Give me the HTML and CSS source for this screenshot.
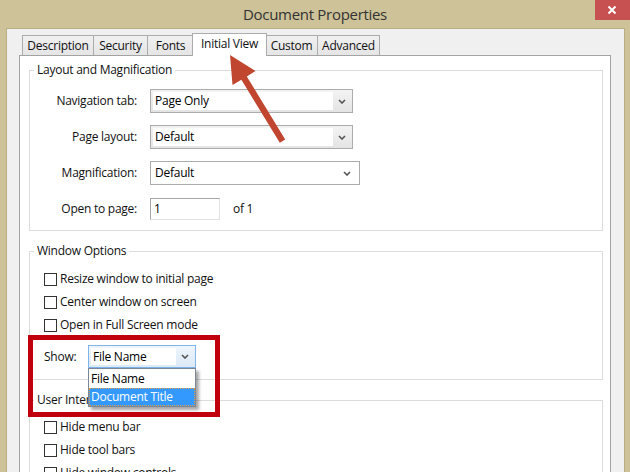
FILE: index.html
```html
<!DOCTYPE html>
<html>
<head>
<meta charset="utf-8">
<title>Document Properties</title>
<link rel="stylesheet" href="styles.css">
</head>
<body>
<div class="window">
  <div class="titlebar">
    <div></div>
    <div class="title">Document Properties</div>
    <div class="close"><svg width="10" height="10" viewBox="0 0 10 10"><path d="M1.5 1.5L8.5 8.5M8.5 1.5L1.5 8.5" stroke="#fff" stroke-width="2"/></svg></div>
  </div>
  <div class="dialog">
    <div class="tabs">
      <div class="tab t-desc">Description</div>
      <div class="tab t-sec">Security</div>
      <div class="tab t-fonts">Fonts</div>
      <div class="tab tab-active t-init">Initial View</div>
      <div class="tab t-custom">Custom</div>
      <div class="tab t-adv">Advanced</div>
    </div>
    <div class="panel">
      <fieldset class="group">
        <legend>Layout and Magnification</legend>
        <div class="form">
          <div class="flabel">Navigation tab:</div>
          <div class="select select-grey w203"><span class="val">Page Only</span><span class="btn"><svg width="8" height="5" viewBox="0 0 8 5"><path d="M1 1L4 4L7 1" fill="none" stroke="#555" stroke-width="1.6"/></svg></span></div>
          <div class="flabel">Page layout:</div>
          <div class="select select-grey w203"><span class="val">Default</span><span class="btn"><svg width="8" height="5" viewBox="0 0 8 5"><path d="M1 1L4 4L7 1" fill="none" stroke="#555" stroke-width="1.6"/></svg></span></div>
          <div class="flabel">Magnification:</div>
          <div class="select select-white w210"><span class="val">Default</span><span class="btn"><svg width="8" height="5" viewBox="0 0 8 5"><path d="M1 1L4 4L7 1" fill="none" stroke="#555" stroke-width="1.6"/></svg></span></div>
          <div class="flabel">Open to page:</div>
          <div class="pagefield"><div class="textbox">1</div><span class="of">of 1</span></div>
        </div>
      </fieldset>

      <fieldset class="group">
        <legend>Window Options</legend>
        <div class="checks">
          <div class="cb"><span class="box"></span>Resize window to initial page</div>
          <div class="cb"><span class="box"></span>Center window on screen</div>
          <div class="cb"><span class="box"></span>Open in Full Screen mode</div>
        </div>
        <div class="showrow">
          <span class="showlabel">Show:</span>
          <div class="combo">
            <div class="select select-focus"><span class="val">File Name</span><span class="btn"><svg width="8" height="5" viewBox="0 0 8 5"><path d="M1 1L4 4L7 1" fill="none" stroke="#555" stroke-width="1.6"/></svg></span></div>
            <div class="droplist">
              <div class="item">File Name</div>
              <div class="item item-sel">Document Title</div>
            </div>
          </div>
        </div>
      </fieldset>

      <fieldset class="group">
        <legend>User Interface Options</legend>
        <div class="checks checks-ui">
          <div class="cb"><span class="box"></span>Hide menu bar</div>
          <div class="cb"><span class="box"></span>Hide tool bars</div>
          <div class="cb"><span class="box"></span>Hide window controls</div>
        </div>
      </fieldset>
    </div>
  </div>
  <div class="redbox"></div>
  <svg class="arrow" width="630" height="472" viewBox="0 0 630 472">
    <polygon points="230,55 255.5,71 246.8,76.4 285.2,139.4 279.8,142.8 241.4,79.8 232.5,85" fill="#c1462f"/>
  </svg>
</div>
</body>
</html>
```

FILE: styles.css
```css
* { box-sizing: border-box; }
html, body { margin: 0; padding: 0; }
body {
  font-family: "Open Sans", "Noto Sans", "Liberation Sans", sans-serif;
  font-size: 12px;
  line-height: 16px;
  letter-spacing: -0.25px;
  color: #111;
  background: #cdc298;
}
.window {
  position: relative;
  width: 630px;
  height: 472px;
  overflow: hidden;
  background: #cdc298;
}
.titlebar {
  height: 28px;
  display: grid;
  grid-template-columns: 1fr auto 1fr;
}
.title {
  font-size: 15px;
  line-height: 28px;
  color: #333;
  letter-spacing: -0.3px;
}
.close {
  justify-self: end;
  width: 35px;
  height: 20px;
  background: #c75050;
  display: flex;
  align-items: center;
  justify-content: center;
  padding-right: 1px;
}
.close svg { display: block; }
.dialog {
  margin-left: 6px;
  width: 619px;
  height: 444px;
  background: #f0f0f0;
  border: 1px solid #b9ae84;
  border-bottom: none;
  padding: 6px 13px 0 12px;
}
.tabs {
  display: flex;
  align-items: flex-end;
  padding-left: 3px;
  height: 20px;
  position: relative;
  z-index: 2;
}
.tab {
  height: 20px;
  border: 1px solid #acacac;
  border-bottom: none;
  background: linear-gradient(#f0f0f0, #e5e5e5);
  margin-right: -1px;
  text-align: center;
  line-height: 19px;
  white-space: nowrap;
  color: #111;
}
.tab-active {
  height: 23px;
  margin-bottom: -1px;
  margin-left: -1px;
  margin-right: -2px;
  background: #fff;
  line-height: 20px;
  position: relative;
  z-index: 3;
}
.t-desc { width: 72px; }
.t-sec { width: 55px; }
.t-fonts { width: 47px; }
.t-init { width: 75px; }
.t-custom { width: 53px; }
.t-adv { width: 63px; }
.panel {
  width: 592px;
  height: 430px;
  background: #fff;
  border: 1px solid #a3a3a3;
  padding: 6px 7px 0 9px;
  position: relative;
  z-index: 1;
}
.group {
  margin: 0;
  padding: 0;
  border: 1px solid #dcdcdc;
  min-width: 0;
}
.group + .group { margin-top: 12px; }
.group legend {
  margin-left: 4px;
  padding: 0 3px;
  line-height: 16px;
  color: #111;
}
.form {
  display: grid;
  grid-template-columns: 107px auto;
  column-gap: 13px;
  row-gap: 12px;
  grid-auto-rows: 24px;
  align-items: center;
  padding: 11px 0 9px 0;
}
.flabel {
  text-align: right;
  white-space: nowrap;
}
.select {
  height: 24px;
  display: flex;
  align-items: stretch;
  border: 1px solid #acacac;
  padding: 2px;
}
.select .val {
  flex: 1;
  background: #fff;
  padding-left: 2px;
  line-height: 18px;
  white-space: nowrap;
  color: #000;
}
.select .btn {
  width: 17px;
  display: flex;
  align-items: center;
  justify-content: center;
}
.select .btn svg { display: block; }
.select-grey { background: linear-gradient(#f3f3f3, #e4e4e4); }
.select-white { background: #fff; padding-right: 4px; }
.w203 { width: 203px; }
.w210 { width: 210px; }
.pagefield {
  display: flex;
  align-items: center;
}
.textbox {
  width: 70px;
  height: 22px;
  border: 1px solid;
  border-color: #a6a6a6 #e3e3e3 #e3e3e3 #a6a6a6;
  background: #fff;
  padding-left: 3px;
  line-height: 19px;
  color: #000;
}
.of { margin-left: 13px; }
.checks {
  display: flex;
  flex-direction: column;
  gap: 3px;
  padding: 10px 0 0 14px;
}
.checks-ui { padding-top: 9px; }
.cb {
  height: 20px;
  display: flex;
  align-items: center;
  white-space: nowrap;
}
.box {
  width: 13px;
  height: 13px;
  border: 1px solid #333;
  background: #fff;
  margin-right: 3px;
}
.showrow {
  display: flex;
  align-items: center;
  height: 23px;
  margin: 10px 0 11px 14px;
}
.showlabel { width: 44px; }
.combo {
  position: relative;
  width: 108px;
  height: 23px;
}
.select-focus {
  width: 108px;
  height: 23px;
  border-color: #7eb4ea;
  background: linear-gradient(#eef5fc, #dce9f7);
}
.select-focus .val { line-height: 17px; }
.droplist {
  position: absolute;
  left: 0;
  top: 100%;
  width: 108px;
  background: #fff;
  border: 1px solid #7a8796;
  box-shadow: 3px 3px 3px rgba(0, 0, 0, 0.35);
  z-index: 10;
}
.item {
  height: 19px;
  line-height: 19px;
  padding-left: 2px;
  white-space: nowrap;
  color: #000;
}
.item-sel {
  height: 18px;
  line-height: 16px;
  background: #3399ff;
  color: #fff;
  border: 1px dotted #e39b4c;
  padding-left: 1px;
}
.redbox {
  position: absolute;
  left: 28px;
  top: 335px;
  width: 192px;
  height: 82px;
  border: 5px solid #c0000c;
  z-index: 5;
}
.arrow {
  position: absolute;
  left: 0;
  top: 0;
  z-index: 6;
  pointer-events: none;
}
```
